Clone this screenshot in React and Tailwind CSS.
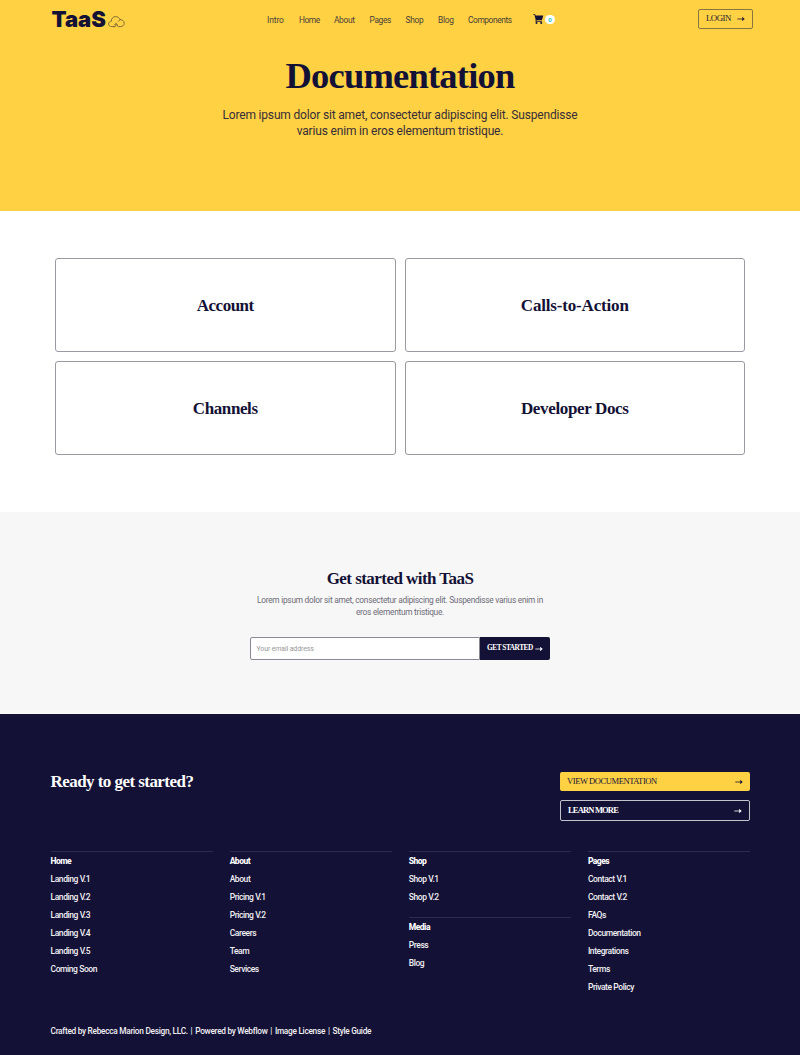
import React from "react";

const NAV = [
  ["Intro", "w-[17px] mr-[15px]", "tracking-[-0.08px]"],
  ["Home", "w-[20.5px] mr-[14.5px]", "tracking-[-0.45px]"],
  ["About", "w-[20.5px] mr-[15px]", "tracking-[-0.35px]"],
  ["Pages", "w-[21.5px] mr-[14.5px]", "tracking-[-0.35px]"],
  ["Shop", "w-[18px] mr-[14.5px]", "tracking-[-0.25px]"],
  ["Blog", "w-[15.5px] mr-[14.5px]", "tracking-[-0.28px]"],
  ["Components", "w-[44px]", "tracking-[-0.42px]"],
];

const DOCS = [
  ["Account", "tracking-[-0.5px]"],
  ["Calls-to-Action", "tracking-[-0.17px]"],
  ["Channels", "tracking-[-0.4px]"],
  ["Developer Docs", "tracking-[-0.35px]"],
];

const COLUMNS = [
  [{ title: "Home", links: ["Landing V.1", "Landing V.2", "Landing V.3", "Landing V.4", "Landing V.5", "Coming Soon"] }],
  [{ title: "About", links: ["About", "Pricing V.1", "Pricing V.2", "Careers", "Team", "Services"] }],
  [
    { title: "Shop", links: ["Shop V.1", "Shop V.2"] },
    { title: "Media", links: ["Press", "Blog"] },
  ],
  [{ title: "Pages", links: ["Contact V.1", "Contact V.2", "FAQs", "Documentation", "Integrations", "Terms", "Private Policy"] }],
];

const CREDITS = ["Crafted by Rebecca Marion Design, LLC.", "Powered by Webflow", "Image License", "Style Guide"];

function Arrow() {
  return (
    <svg className="h-[6px] w-[8px] shrink-0" viewBox="0 0 8 6" fill="none">
      <path d="M0.3 3H6" stroke="currentColor" strokeWidth="0.8" />
      <path d="M5 0.7L7.8 3L5 5.3L5.4 3Z" fill="currentColor" />
    </svg>
  );
}

function Cloud() {
  return (
    <svg className="mt-[8px] ml-[1.5px] h-[12px] w-[17px]" viewBox="0 0 17 12" fill="none" stroke="#5d4d33" strokeWidth="0.75" strokeLinecap="round">
      <path d="M7 10.6H3.6C1.9 10.6 0.6 9.4 0.6 7.9C0.6 6.4 1.8 5.3 3.3 5.3C3.2 2.5 5.2 0.6 7.7 0.6C9.8 0.6 11.5 1.9 12 3.7C14.4 3.6 16.2 5 16.2 7.1C16.2 9.2 14.7 10.6 12.6 10.6H10.6C9.6 10.6 9.2 9.9 9.2 9" />
      <path d="M10.3 5.4C11 4.5 11.4 4.2 12 3.7" />
      <path d="M7 10.6C7.7 10.3 7.9 9.7 7.9 9V7.8M6.4 8.9L7.9 7.4L9.4 8.8" />
    </svg>
  );
}

function Cart() {
  return (
    <svg className="h-[10px] w-[11px]" viewBox="0 0 11 10" fill="#141136">
      <path d="M0.2 0.2H2.1L2.7 1.5H10.3L9 6H3.7L3.5 6.8H9V7.7H2.4L2.7 5.9L1.5 1.1H0.2Z" />
      <circle cx="3.5" cy="8.9" r="1" />
      <circle cx="8.2" cy="8.9" r="1" />
    </svg>
  );
}

function FooterGroup({ group }) {
  return (
    <div className="border-t border-[#302b4d] text-[8.5px] leading-[18px]">
      <h4 className="font-extrabold tracking-[-0.5px] text-white">{group.title}</h4>
      <ul className="font-medium tracking-[-0.42px] text-[#f1f0f3]">
        {group.links.map((l) => (
          <li key={l}>{l}</li>
        ))}
      </ul>
    </div>
  );
}

export default function App() {
  return (
    <div className="flex h-[1055px] w-[800px] flex-col overflow-hidden bg-white font-['Roboto',sans-serif] text-[#141136]">
      <header className="h-[211px] shrink-0 bg-[#ffd143]">
        <div className="flex h-[38px] items-start pr-[47.5px] pl-[51.5px]">
          <a className="flex w-[215.5px] pt-[8px]">
            <span className="w-[54.5px] font-['Inter',sans-serif] text-[22px] leading-[22px] font-black">TaaS</span>
            <Cloud />
          </a>
          <nav className="flex pt-[14px] text-[8.4px] leading-[13px] text-[#4a3d38]">
            {NAV.map(([t, w, tr]) => (
              <a key={t} className={`whitespace-nowrap ${w} ${tr}`}>{t}</a>
            ))}
          </nav>
          <div className="mt-[14px] ml-[20.5px] flex items-center gap-[1.5px]">
            <Cart />
            <span className="flex h-[9px] w-[10px] items-center justify-center rounded-full bg-white text-[6px] font-bold text-[#2cc5b8]">0</span>
          </div>
          <a className="mt-[9px] ml-auto flex h-[20px] w-[54.5px] items-center justify-between rounded-[2px] border border-[#8a7440] px-[7px] font-['Liberation_Serif',serif] text-[8.8px] tracking-[-0.5px] text-[#241b37]">
            LOGIN
            <Arrow />
          </a>
        </div>
        <h1 className="mt-[18px] text-center font-['Liberation_Serif',serif] text-[36.5px] leading-[40px] font-bold tracking-[-0.78px]">Documentation</h1>
        <p className="mt-[11px] text-center text-[12px] leading-[16px] tracking-[-0.17px] text-[#382d38]">
          Lorem ipsum dolor sit amet, consectetur adipiscing elit. Suspendisse
          <br />
          varius enim in eros elementum tristique.
        </p>
      </header>

      <main className="h-[301px] shrink-0 px-[55px] pt-[47px]">
        <div className="grid grid-cols-2 gap-x-[9px] gap-y-[9px]">
          {DOCS.map(([d, tr]) => (
            <a key={d} className={`flex h-[94px] items-center justify-center rounded-[3px] border border-[#9b99a4] pt-[2px] font-['Liberation_Serif',serif] text-[17px] leading-[20px] font-bold ${tr}`}>
              {d}
            </a>
          ))}
        </div>
      </main>

      <section className="h-[202px] shrink-0 bg-[#f7f7f7] pt-[57px] text-center">
        <h2 className="font-['Liberation_Serif',serif] text-[17px] leading-[20px] font-bold tracking-[-0.55px]">Get started with TaaS</h2>
        <p className="mt-[5px] text-[8.3px] leading-[12px] tracking-[-0.25px] text-[#6d6b77]">
          Lorem ipsum dolor sit amet, consectetur adipiscing elit. Suspendisse varius enim in
          <br />
          eros elementum tristique.
        </p>
        <div className="mx-auto mt-[19px] flex h-[23px] w-[300px]">
          <div className="flex w-[230px] items-center rounded-l-[2px] border border-[#8b8995] bg-white pt-[1px] pl-[5.5px] text-[7px] tracking-[-0.14px] text-[#999]">Your email address</div>
          <a className="flex w-[70px] items-center justify-between rounded-r-[2px] bg-[#141136] px-[7px] font-['Liberation_Serif',serif] text-[7.3px] font-bold tracking-[-0.45px] text-white">
            GET STARTED
            <Arrow />
          </a>
        </div>
      </section>

      <footer className="flex-1 bg-[#141136] pr-[50px] pl-[50.5px]">
        <div className="flex h-[137px] justify-between pt-[58px]">
          <h2 className="font-['Liberation_Serif',serif] text-[17px] leading-[20px] font-bold tracking-[-0.55px] text-white">Ready to get started?</h2>
          <div className="flex w-[190px] flex-col gap-[9px] font-['Liberation_Serif',serif] text-[8.5px]">
            <a className="flex h-[19px] items-center justify-between rounded-[2px] bg-[#ffd143] px-[7px] tracking-[-0.41px] text-[#141136]">
              VIEW DOCUMENTATION
              <Arrow />
            </a>
            <a className="flex h-[21px] items-center justify-between rounded-[2px] border border-[#c4c3cc] px-[7px] font-bold tracking-[-0.83px] text-white">
              LEARN MORE
              <Arrow />
            </a>
          </div>
        </div>
        <div className="grid h-[170.5px] grid-cols-4 gap-x-[17px]">
          {COLUMNS.map((groups, i) => (
            <div key={i} className="flex flex-col gap-[11px]">
              {groups.map((g) => (
                <FooterGroup key={g.title} group={g} />
              ))}
            </div>
          ))}
        </div>
        <p className="flex gap-[2.8px] text-[8.3px] leading-[18px] font-medium tracking-[-0.29px] whitespace-nowrap text-[#f1f0f3]">
          {CREDITS.map((c, i) => (
            <React.Fragment key={c}>
              {i > 0 && <span>|</span>}
              <span>{c}</span>
            </React.Fragment>
          ))}
        </p>
      </footer>
    </div>
  );
}
